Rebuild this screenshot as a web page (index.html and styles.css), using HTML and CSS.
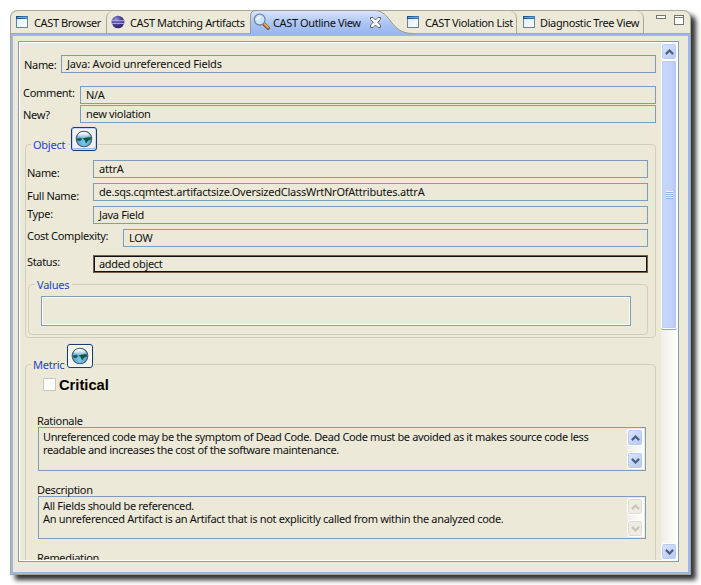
FILE: index.html
```html
<!DOCTYPE html>
<html lang="en">
<head>
<meta charset="utf-8">
<title>CAST Outline View</title>
<link rel="stylesheet" href="styles.css">
</head>
<body>
<svg class="defs" width="0" height="0">
  <defs>
    <linearGradient id="titlebar" x1="0" x2="1"><stop offset="0" stop-color="#1b4a86"/><stop offset="1" stop-color="#3f7fc4"/></linearGradient>
    <linearGradient id="pane" x1="0" y1="0" x2="1" y2="1"><stop offset="0" stop-color="#d3ebfa"/><stop offset="1" stop-color="#fff"/></linearGradient>
    <linearGradient id="tabfill" x1="0" y1="0" x2="0" y2="1"><stop offset="0" stop-color="#dce7fa"/><stop offset=".55" stop-color="#aac4f3"/><stop offset="1" stop-color="#99b6ef"/></linearGradient>
    <radialGradient id="ball" cx=".35" cy=".3" r=".8"><stop offset="0" stop-color="#9a90d8"/><stop offset=".5" stop-color="#4c4098"/><stop offset="1" stop-color="#2a2066"/></radialGradient>
    <radialGradient id="sea" cx=".5" cy=".75" r=".75"><stop offset="0" stop-color="#7cc8f4"/><stop offset=".6" stop-color="#58a4cc"/><stop offset="1" stop-color="#d8eae8"/></radialGradient>
    <linearGradient id="shine" x1="0" y1="0" x2="0" y2="1"><stop offset="0" stop-color="#fff"/><stop offset="1" stop-color="#fff" stop-opacity=".25"/></linearGradient>
    <symbol id="window" viewBox="0 0 12 12"><rect x=".5" y=".5" width="11" height="11" fill="url(#pane)" stroke="#6d8291"/><rect width="12" height="3" fill="url(#titlebar)"/><path d="M1 1.5H11" stroke="#79b4e8" stroke-width=".8"/></symbol>
    <symbol id="globe" viewBox="0 0 18 18"><circle cx="9" cy="9" r="7.8" fill="url(#sea)" stroke="#4a5a78" stroke-width="1.1"/><path d="M1.8 8.2Q4 8.8 6.2 8L6.8 9.4 5 11 2.4 10.6ZM7.6 8.3Q11 7 15.9 7.2L16 9.5 13.2 10.4 11 13.4 9.6 10Z" fill="#12583f"/><ellipse cx="8.6" cy="5" rx="5.4" ry="2.9" fill="url(#shine)"/></symbol>
    <symbol id="up" viewBox="0 0 9 6"><path d="M.9 5.1L4.5 1.5 8.1 5.1" fill="none" stroke="currentColor" stroke-width="2.2"/></symbol>
    <symbol id="down" viewBox="0 0 9 6"><path d="M.9 .9L4.5 4.5 8.1 .9" fill="none" stroke="currentColor" stroke-width="2.2"/></symbol>
  </defs>
</svg>
<main class="window">
  <header class="tabs">
    <div class="tab t-browser"><svg class="ico"><use href="#window"/></svg><span>CAST Browser</span></div>
    <div class="tab t-match">
      <svg class="ecl" viewBox="0 0 14 14"><circle cx="7" cy="7" r="6.3" fill="url(#ball)"/><path d="M.2 5.7H13.8M0 8.3H14" stroke="#b4bbed" stroke-width="1"/><path d="M.7 7H13.3" stroke="#5550a0"/></svg>
      <span>CAST Matching Artifacts</span></div>
    <div class="tab t-outline">
      <svg class="shape" viewBox="0 0 164 24"><path d="M0 24V6Q0 .5 6 .5H124C142 .5 139 23.5 163 23.5V24Z" fill="url(#tabfill)"/><path d="M.5 24V6Q.5 .5 6 .5H124C142 .5 139 23.5 163 23.5" fill="none" stroke="#9c9a90"/></svg>
      <svg class="mag" viewBox="0 0 17 17"><path d="M10.5 10.5L15 15" stroke="#62513c" stroke-width="3.6" stroke-linecap="round"/><path d="M11.2 10.7L15 14.5" stroke="#f1a33c" stroke-width="2" stroke-linecap="round"/><circle cx="6.7" cy="6.6" r="5.4" fill="#c7e5fb" stroke="#74899c" stroke-width="1.3"/><path d="M3.4 7Q4 3.5 8.5 3.2Q7 6.2 3.4 7Z" fill="#fff"/></svg>
      <span>CAST Outline View</span>
      <svg class="close" viewBox="0 0 11 11"><path d="M.5 .5H3L5.5 3 8 .5H10.5V2.5L7.7 5.3 10.5 8.2V10.5H8L5.5 8 3 10.5H.5V8.2L3.3 5.3 .5 2.5Z" fill="#fff" stroke="#5f6470"/></svg>
    </div>
    <div class="tab t-list"><svg class="ico"><use href="#window"/></svg><span>CAST Violation List</span></div>
    <div class="tab t-tree"><svg class="ico"><use href="#window"/></svg><span>Diagnostic Tree View</span></div>
    <div class="controls"><i class="min"></i><i class="max"></i></div>
  </header>
  <section class="body">
    <div class="view">
      <div class="form">
        <div class="row r-name"><label>Name:</label><div class="field"><span class="wide">Java: Avoid unreferenced Fields</span></div></div>
        <div class="row r-comment"><label>Comment:</label><div class="field"><span>N/A</span></div></div>
        <div class="row r-new"><label>New?</label><div class="field"><span>new violation</span></div></div>

        <section class="group object">
          <div class="legend"><span>Object</span><button class="gbtn blue"><svg><use href="#globe"/></svg></button></div>
          <div class="row o-name"><label>Name:</label><div class="field"><span class="wide">attrA</span></div></div>
          <div class="row o-full"><label>Full Name:</label><div class="field"><span class="wide">de.sqs.cqmtest.artifactsize.OversizedClassWrtNrOfAttributes.attrA</span></div></div>
          <div class="row o-type"><label>Type:</label><div class="field"><span>Java Field</span></div></div>
          <div class="row o-cost"><label>Cost Complexity:</label><div class="field"><span>LOW</span></div></div>
          <div class="row o-status"><label>Status:</label><div class="field"><span>added object</span></div></div>
          <section class="group values"><div class="legend"><span>Values</span></div><div class="list"></div></section>
        </section>

        <section class="group metric">
          <div class="legend"><span>Metric</span><button class="gbtn"><svg><use href="#globe"/></svg></button></div>
          <div class="critical"><i class="check"></i><b>Critical</b></div>
          <h4>Rationale</h4>
          <div class="area"><p>Unreferenced code may be the symptom of Dead Code. Dead Code must be avoided as it makes source code less<br>readable and increases the cost of the software maintenance.</p>
            <div class="bar mini"><i class="sb"><svg><use href="#up"/></svg></i><i class="sb"><svg><use href="#down"/></svg></i></div></div>
          <h4>Description</h4>
          <div class="area desc"><p>All Fields should be referenced.<br>An unreferenced Artifact is an Artifact that is not explicitly called from within the analyzed code.</p>
            <div class="bar mini off"><i class="sb"><svg><use href="#up"/></svg></i><i class="sb"><svg><use href="#down"/></svg></i></div></div>
          <h4>Remediation</h4>
        </section>
      </div>
      <div class="bar main"><i class="sb"><svg><use href="#up"/></svg></i><div class="thumb"><i class="grip"></i></div><i class="sb last"><svg><use href="#down"/></svg></i></div>
    </div>
  </section>
</main>
</body>
</html>
```
FILE: styles.css
```css
* { box-sizing: border-box; }
body { margin: 0; padding: 10px 0 0 10px; height: 585px; background: #fff; font: 11px/13px "Noto Sans", sans-serif; letter-spacing: -.32px; color: #111; overflow: hidden; }
svg { display: block; flex: none; }
.defs { position: absolute; }
i { display: block; flex: none; }
span, label, p, h4 { white-space: nowrap; }
.wide { letter-spacing: -.24px; }

.window { width: 681px; height: 565px; background: #ece9d8; border: 1px solid #a3a59f; border-width: 0 1px 1px; border-radius: 7px 7px 0 0; box-shadow: 5px 5px 5px #333; }

.tabs { display: flex; height: 24px; border: 1px solid #aca899; border-width: 1px 0; border-radius: 7px 7px 0 0; }
.tab { display: flex; height: 22px; }
.tab span { margin-top: 5px; letter-spacing: -.38px; }
.ico { width: 12px; height: 12px; margin: 5px 6px 0 5px; }
.t-browser { width: 95px; }
.t-match { width: 145px; border-left: 1px solid #aca899; border-top-left-radius: 7px; }
.ecl { width: 14px; height: 14px; margin: 4px 5px 0 4px; }
.t-outline { position: relative; width: 151px; }
.t-outline > * { position: relative; }
.t-outline .shape { position: absolute; left: -1px; top: -1px; width: 164px; height: 24px; }
.mag { width: 17px; height: 17px; margin: 2px 3px 0 2px; }
.t-outline span { width: 97px; }
.close { width: 11px; height: 11px; margin-top: 6px; }
.t-list { width: 115px; border-right: 1px solid #aca899; border-top-right-radius: 7px; }
.t-tree { width: 127px; border-right: 1px solid #aca899; border-top-right-radius: 7px; }
.t-tree .ico { margin-left: 6px; margin-right: 5px; }
.controls { display: flex; gap: 8px; margin: 4px 0 0 12px; }
.min { width: 10px; height: 4px; border: 1px solid #77756c; background: #fff; }
.max { width: 10px; height: 10px; border: 1px solid #77756c; background: linear-gradient(#fff 1px, #77756c 1px, #77756c 2px, #fff 2px); }

.body { height: 540px; padding: 5px 9px 10px 5px; border: solid #9ab6ec; border-width: 2px 2px 2px 2px; border-left-color: #a5b5d4; }
.view { display: flex; width: 661px; height: 521px; border: 1px solid #7f9db9; box-shadow: inset 0 0 0 1px #fff; padding: 1px; }
.form { width: 641px; height: 517px; overflow: hidden; padding: 12px 5px 0 4px; }

.row { display: flex; height: 18px; }
.row label { width: 66px; margin: 2px 0 0 -1px; flex: none; }
.field { flex: 1; height: 18px; border: 1px solid #7f9db9; padding: 1px 0 0 5px; line-height: 13px; }
.r-name .wide { letter-spacing: -.19px; }
.row.r-name label { width: 37px; margin: 3px 0 0; }
.r-comment { margin-top: 13px; }
.row.r-comment label, .row.r-new label { width: 57px; margin-top: 0; }
.r-new { margin-top: 1px; }
.row.r-new label { margin-top: 3px; }

.group { border: 1px solid #d0d0bf; border-radius: 4px; }
.legend { display: flex; align-items: flex-start; color: #1c46c0; }
.legend span { background: #ece9d8; padding: 0 2px; height: 13px; width: 37px; letter-spacing: -.25px; }
.gbtn { width: 26px; height: 24px; padding: 0; border: 1px solid #183f6c; border-radius: 3px; background: #f4f3ee; box-shadow: inset 0 0 0 1px #fdfdfb, 0 0 0 1px #e4e3da; display: flex; align-items: center; justify-content: center; }
.gbtn.blue { box-shadow: inset 0 0 0 1px #c3d5f9, inset -1px -2px 0 #9db9ec, 0 0 0 1px #e4e3da; }
.gbtn svg { width: 18px; height: 18px; }
.object { margin: 21px 0 0 1px; height: 194px; padding: 0 7px 0 2px; }
.object > .legend { height: 15px; margin-left: 3px; }
.object > .legend span { margin-top: -7px; }
.object > .legend .gbtn { margin: -18px 0 0 3px; }
.row.o-name label { margin-top: 6px; }
.o-full, .o-type, .o-cost { margin-top: 5px; }
.row.o-full label { margin-top: 6px; }
.row.o-type label { margin-top: 1px; }
.row.o-cost label { width: 96px; margin-top: 0; }
.o-status { margin-top: 8px; }
.row.o-status label { margin-top: 0; }
.o-status .field { border-color: #7a5a48; box-shadow: inset 0 0 0 1px #111; }
.values { margin-top: 11px; height: 51px; padding: 0 16px 0 12px; }
.values .legend { height: 11px; margin-left: -6px; }
.values .legend span { margin-top: -7px; }
.values .list { height: 30px; border: 1px solid #7f9db9; box-shadow: inset 0 0 0 1px #fff; }

.metric { margin: 26px 0 0 1px; height: 230px; padding: 0 9px 0 12px; }
.metric .legend { height: 13px; margin-left: -7px; }
.metric .legend span { width: 33px; margin-top: -7px; }
.metric .gbtn { margin: -21px 0 0 3px; }
.critical { display: flex; margin-left: 5px; height: 36px; letter-spacing: 0; }
.check { width: 13px; height: 13px; border: 1px solid #cac8bb; background: #fff; }
.critical b { margin: 0 0 0 3px; font: bold 14.7px/15px "Liberation Sans", sans-serif; color: #000; }
h4 { margin: 0; font: inherit; height: 13px; margin-left: -1px; }
.area { display: flex; justify-content: space-between; height: 44px; border: 1px solid #7f9db9; margin-bottom: 12px; padding: 1px 1px 1px 4px; }
.area.desc { height: 43px; }
.area p { margin: 1px 0 0; letter-spacing: -.36px; }
.area.desc p { letter-spacing: -.31px; }

.bar { display: flex; flex-direction: column; background: linear-gradient(90deg, #f0eee6, #fefefb); }
.sb { display: flex; align-items: center; justify-content: center; width: 16px; height: 17px; border: 1px solid #fff; border-radius: 3px; background: linear-gradient(135deg, #dce6fe, #b4c8f6); box-shadow: inset 0 0 0 1px #b9cbf3; color: #4d6185; }
.sb svg { width: 9px; height: 6px; }
.mini { width: 17px; justify-content: space-between; }
.off .sb { background: #eeede5; box-shadow: inset 0 0 0 1px #dedccf; color: #c9c7ba; }
.main { width: 16px; }
.thumb { display: flex; align-items: center; justify-content: center; width: 16px; height: 269px; border: 1px solid #fff; border-radius: 2px; box-shadow: inset 0 0 0 1px #b9cbf3, 0 1px 0 #8ca6cf; background: linear-gradient(90deg, #cad8fd, #c1d2fb 70%, #b2c6f5); }
.grip { width: 7px; height: 8px; background: repeating-linear-gradient(#eef4fe 0 1px, #8cb0f8 1px 2px); }
.last { margin-top: auto; }
```
